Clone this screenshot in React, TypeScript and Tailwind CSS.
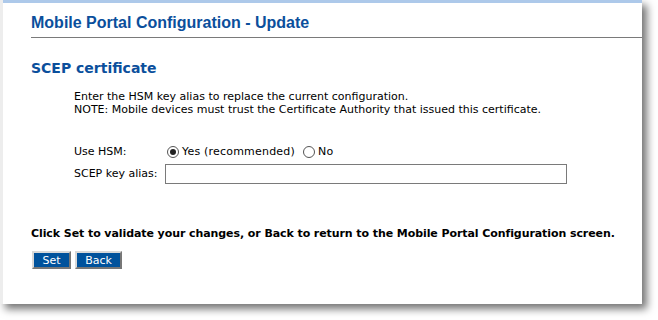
export default function App() {
  return (
    <div className="w-[658px] h-[320px] bg-white">
      <div className="w-[642px] h-[304px] flex flex-col bg-white border-l-[3px] border-[#ededed] shadow-[5px_5px_8px_rgba(0,0,0,0.55)]">
        <div className="h-[3px] bg-[#adc9ea]" />

        {/* page header */}
        <div className="ml-[28px] pt-[10px] pb-[4px] border-b border-[#7a7a7a]">
          <h1 className="font-['Liberation_Sans',Arial,sans-serif] font-bold text-[16px] leading-[20px] text-[#0b4f9c]">
            Mobile Portal Configuration - Update
          </h1>
        </div>

        <div className="ml-[28px] font-['DejaVu_Sans',Verdana,sans-serif] text-[11px] text-black">
          <h2 className="mt-[21px] font-bold text-[14px] leading-[18px] text-[#0b4f9c]">SCEP certificate</h2>

          <div className="mt-[13px] pl-[43px] leading-[13px]">
            <p>Enter the HSM key alias to replace the current configuration.</p>
            <p>NOTE: Mobile devices must trust the Certificate Authority that issued this certificate.</p>
          </div>

          <div className="mt-[26px] pl-[43px] flex flex-col gap-[2px]">
            <div className="flex items-center h-[20px]">
              <span className="w-[93px]">Use HSM:</span>
              <label className="flex items-center">
                <span className="w-[12px] h-[12px] rounded-full border border-[#555] flex items-center justify-center bg-white">
                  <span className="w-[6px] h-[6px] rounded-full bg-[#222]" />
                </span>
                <span className="ml-[3px] tracking-[0.2px]">Yes (recommended)</span>
              </label>
              <label className="flex items-center ml-[8px]">
                <span className="w-[12px] h-[12px] rounded-full border border-[#555] bg-white" />
                <span className="ml-[3px] tracking-[0.2px]">No</span>
              </label>
            </div>
            <div className="flex items-center h-[20px]">
              <span className="w-[91px]">SCEP key alias:</span>
              <input
                type="text"
                className="w-[402px] h-[20px] border border-[#7a7a7a] bg-white outline-none px-1"
              />
            </div>
          </div>

          <p className="mt-[43px] font-bold leading-[13px] tracking-[-0.08px]">
            Click Set to validate your changes, or Back to return to the Mobile Portal Configuration screen.
          </p>

          <div className="mt-[11px] ml-[1px] flex gap-[4px]">
            <button className="w-[39px] h-[18px] bg-[#00529c] text-white text-[11px] leading-none border-2 border-t-[#d8d8d8] border-l-[#d8d8d8] border-r-[#777] border-b-[#777]">
              Set
            </button>
            <button className="w-[47px] h-[18px] bg-[#00529c] text-white text-[11px] leading-none border-2 border-t-[#d8d8d8] border-l-[#d8d8d8] border-r-[#777] border-b-[#777]">
              Back
            </button>
          </div>
        </div>
      </div>
    </div>
  )
}
